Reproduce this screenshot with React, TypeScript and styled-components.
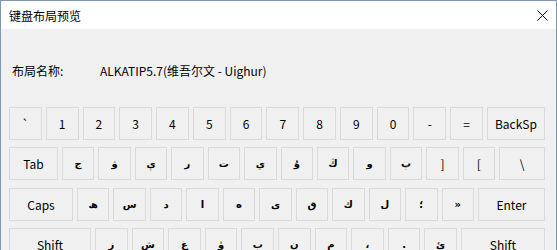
import React from "react";
import styled, { createGlobalStyle } from "styled-components";

const Global = createGlobalStyle`
  html, body { margin: 0; padding: 0; background: #ffffff; }
  body { font-family: "Noto Sans CJK SC", "Noto Sans", sans-serif; }
`;

const Window = styled.div`
  box-sizing: border-box;
  width: 557px;
  height: 250px;
  border: 1px solid #7f96b4;
  border-bottom: none;
  overflow: hidden;
  display: flex;
  flex-direction: column;
  background: #f0f0f0;
`;

const TitleBar = styled.div`
  height: 28px;
  flex: none;
  background: #ffffff;
  display: flex;
  align-items: center;
  justify-content: space-between;
  padding: 0 8px 0 8px;
  font-size: 12px;
  color: #000;
`;

const Close = styled.div`
  width: 12px;
  height: 12px;
  display: flex;
  align-items: center;
  justify-content: center;
`;

const Body = styled.div`
  flex: 1;
  padding: 33px 10px 0 8px;
  display: flex;
  flex-direction: column;
`;

const InfoRow = styled.div`
  height: 16px;
  display: flex;
  align-items: center;
  padding-left: 3px;
  font-size: 12px;
  color: #000;
`;

const Label = styled.span`
  width: 88px;
  flex: none;
`;

const Value = styled.span``;

const Keyboard = styled.div`
  margin-top: 29px;
  width: 536px;
  display: flex;
  flex-direction: column;
  gap: 7.4px;
`;

const Row = styled.div`
  display: flex;
  gap: 4px;
`;

const Key = styled.div<{ $w?: number; $ar?: boolean }>`
  box-sizing: border-box;
  height: 33px;
  ${(p) => (p.$w ? `flex: 0 0 ${p.$w}px;` : `flex: 1 1 0;`)}
  border: 1px solid #dadada;
  background: #f0f0f0;
  display: flex;
  align-items: center;
  justify-content: center;
  color: #000;
  font-family: ${(p) =>
    p.$ar ? `"DejaVu Sans", sans-serif` : `"Noto Sans CJK SC", "Noto Sans", sans-serif`};
  font-size: ${(p) => (p.$ar ? "10px" : "12px")};
  font-weight: ${(p) => (p.$ar ? 700 : 400)};
`;

type K = { t: string; w?: number; ar?: boolean };

const rows: K[][] = [
  [
    { t: "`" }, { t: "1" }, { t: "2" }, { t: "3" }, { t: "4" }, { t: "5" }, { t: "6" },
    { t: "7" }, { t: "8" }, { t: "9" }, { t: "0" }, { t: "-" }, { t: "=" },
    { t: "BackSp", w: 58 },
  ],
  [
    { t: "Tab", w: 49 },
    ..."ج ۋ ې ر ت ي ۇ ڭ و پ".split(" ").map((t) => ({ t, ar: true })),
    { t: "]" }, { t: "[" },
    { t: "\\", w: 46 },
  ],
  [
    { t: "Caps", w: 64 },
    ..."ھ س د ا ە ى ق ك ل ؛ »".split(" ").map((t) => ({ t, ar: true })),
    { t: "Enter", w: 67 },
  ],
  [
    { t: "Shift", w: 82 },
    ..."ز ش غ ۈ ب ن م ، . ئ".split(" ").map((t) => ({ t, ar: true })),
    { t: "Shift", w: 84 },
  ],
];

export default function App() {
  return (
    <>
      <Global />
      <Window>
        <TitleBar>
          <span>键盘布局预览</span>
          <Close>
            <svg width="11" height="11" viewBox="0 0 11 11">
              <path d="M0.5 0.5 L10.5 10.5 M10.5 0.5 L0.5 10.5" stroke="#111" strokeWidth="1" />
            </svg>
          </Close>
        </TitleBar>
        <Body>
          <InfoRow>
            <Label>布局名称:</Label>
            <Value>ALKATIP5.7(维吾尔文 - Uighur)</Value>
          </InfoRow>
          <Keyboard>
            {rows.map((r, i) => (
              <Row key={i}>
                {r.map((k, j) => (
                  <Key key={j} $w={k.w} $ar={k.ar}>
                    {k.t}
                  </Key>
                ))}
              </Row>
            ))}
          </Keyboard>
        </Body>
      </Window>
    </>
  );
}
